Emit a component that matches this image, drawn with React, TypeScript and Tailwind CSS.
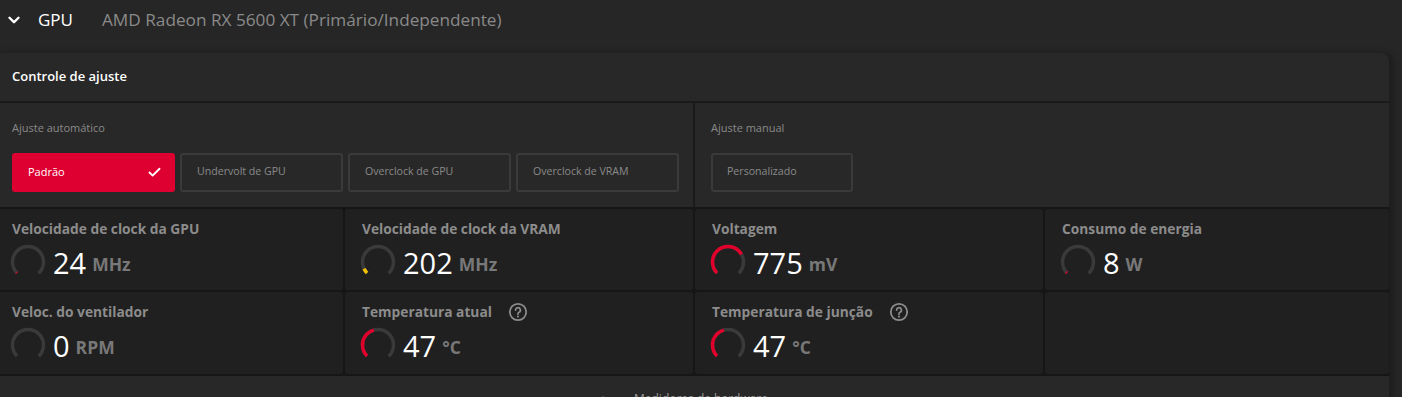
import { ChevronDown, ChevronUp, Check } from "lucide-react";

const font = "font-['Open_Sans','Liberation_Sans',sans-serif]";

type Metric = {
  title: string;
  value: string;
  unit: string;
  frac: number;
  color: string;
  help?: boolean;
};

const metrics: (Metric | null)[] = [
  { title: "Velocidade de clock da GPU", value: "24", unit: "MHz", frac: 0.012, color: "#e0002b" },
  { title: "Velocidade de clock da VRAM", value: "202", unit: "MHz", frac: 0.07, color: "#f2c200" },
  { title: "Voltagem", value: "775", unit: "mV", frac: 0.72, color: "#e0002b" },
  { title: "Consumo de energia", value: "8", unit: "W", frac: 0.015, color: "#e0002b" },
  { title: "Veloc. do ventilador", value: "0", unit: "RPM", frac: 0, color: "#e0002b" },
  { title: "Temperatura atual", value: "47", unit: "°C", frac: 0.44, color: "#e0002b", help: true },
  { title: "Temperatura de junção", value: "47", unit: "°C", frac: 0.44, color: "#e0002b", help: true },
  null,
];

const presets = ["Undervolt de GPU", "Overclock de GPU", "Overclock de VRAM"];

function Gauge({ frac, color }: { frac: number; color: string }) {
  const r = 15.5;
  const c = 2 * Math.PI * r;
  const track = c * 0.75;
  return (
    <svg width="36" height="36" viewBox="0 0 36 36" className="ml-[-2px] shrink-0">
      <circle
        cx="18"
        cy="18"
        r={r}
        fill="none"
        stroke="#3a3a3a"
        strokeWidth="3.5"
        strokeDasharray={`${track} ${c}`}
        transform="rotate(135 18 18)"
      />
      {frac > 0 && (
        <circle
          cx="18"
          cy="18"
          r={r}
          fill="none"
          stroke={color}
          strokeWidth="3.5"
          strokeDasharray={`${track * frac} ${c}`}
          transform="rotate(135 18 18)"
        />
      )}
    </svg>
  );
}

function HelpIcon() {
  return (
    <svg width="20" height="20" viewBox="0 0 20 20" className="shrink-0">
      <circle cx="10" cy="10" r="8.2" fill="none" stroke="#8c8c8c" strokeWidth="1.8" />
      <path
        d="M7.6 8.1a2.4 2.4 0 1 1 3.4 2.2c-.7.3-1 .8-1 1.5v.4"
        fill="none"
        stroke="#8c8c8c"
        strokeWidth="1.7"
        strokeLinecap="round"
      />
      <circle cx="10" cy="14.6" r="1.05" fill="#8c8c8c" />
    </svg>
  );
}

function MetricCell({ m }: { m: Metric | null }) {
  if (!m) return <div className="rounded-[3px] bg-[#202020]" />;
  return (
    <div className="flex flex-col rounded-[3px] bg-[#202020] pl-[17px] pt-[10px]">
      <div className="flex h-[20px] items-center gap-[16px]">
        <span className="text-[13.75px] font-bold text-[#8c8c8c]">{m.title}</span>
        {m.help && <HelpIcon />}
      </div>
      <div className="mt-[5px] flex items-center">
        <Gauge frac={m.frac} color={m.color} />
        <span className="ml-[7px] text-[29px] leading-none text-white">{m.value}</span>
        <span className="ml-[6px] mt-[5px] text-[17.5px] font-bold leading-none text-[#787878]">{m.unit}</span>
      </div>
    </div>
  );
}

export default function App() {
  return (
    <div className={`h-[397px] w-[1402px] overflow-hidden bg-[#262626] ${font}`}>
      <div className="flex h-[40px] items-center">
        <ChevronDown className="ml-[5px] h-[18px] w-[18px] text-white" strokeWidth={3.2} />
        <span className="ml-[15px] text-[17px] text-white">GPU</span>
        <span className="ml-[29px] text-[17.2px] text-[#8a8a8a]">AMD Radeon RX 5600 XT (Primário/Independente)</span>
      </div>

      <div className="ml-[-5px] mt-[13px] w-[1394px] rounded-tr-[8px] bg-[#282828] shadow-[4px_0_6px_rgba(0,0,0,0.25)]">
        <div className="flex h-[48px] items-center pl-[17px]">
          <span className="text-[13px] font-semibold text-white">Controle de ajuste</span>
        </div>

        <div className="grid grid-cols-[698px_1fr] gap-[2px] border-t-2 border-[#1a1a1a] bg-[#1a1a1a]">
          <div className="h-[104px] bg-[#282828] pl-[17px] pt-[17px]">
            <div className="text-[11px] text-[#8a8a8a]">Ajuste automático</div>
            <div className="mt-[16px] flex gap-[5px]">
              <div className="flex h-[39px] w-[163px] items-center justify-between rounded-[3px] bg-[#df0032] pl-[16px] pr-[13px]">
                <span className="text-[11px] text-white">Padrão</span>
                <Check className="h-[15px] w-[15px] text-white" strokeWidth={3} />
              </div>
              {presets.map((p) => (
                <div
                  key={p}
                  className="flex h-[39px] w-[163px] items-center rounded-[3px] border-2 border-[#3a3a3a] pl-[15px]"
                >
                  <span className="text-[10.6px] text-[#8a8a8a]">{p}</span>
                </div>
              ))}
            </div>
          </div>
          <div className="h-[104px] bg-[#282828] pl-[16px] pt-[17px]">
            <div className="text-[11px] text-[#8a8a8a]">Ajuste manual</div>
            <div className="mt-[16px] flex h-[39px] w-[142px] items-center rounded-[3px] border-2 border-[#3a3a3a] pl-[14px]">
              <span className="text-[10.6px] text-[#8a8a8a]">Personalizado</span>
            </div>
          </div>
        </div>

        <div className="grid grid-cols-[348px_348px_348px_1fr] grid-rows-[81px_82px] gap-[2px] border-y-2 border-[#161616] bg-[#161616]">
          {metrics.map((m, i) => (
            <MetricCell key={i} m={m} />
          ))}
        </div>

        <div className="flex h-[30px] items-start justify-center pt-[14px]">
          <div className="ml-[-20px] flex items-center gap-[24px]">
            <ChevronUp className="h-[14px] w-[14px] text-[#9a9a9a]" strokeWidth={3} />
            <span className="text-[12px] text-[#9a9a9a]">Medidores de hardware</span>
          </div>
        </div>
      </div>
    </div>
  );
}
